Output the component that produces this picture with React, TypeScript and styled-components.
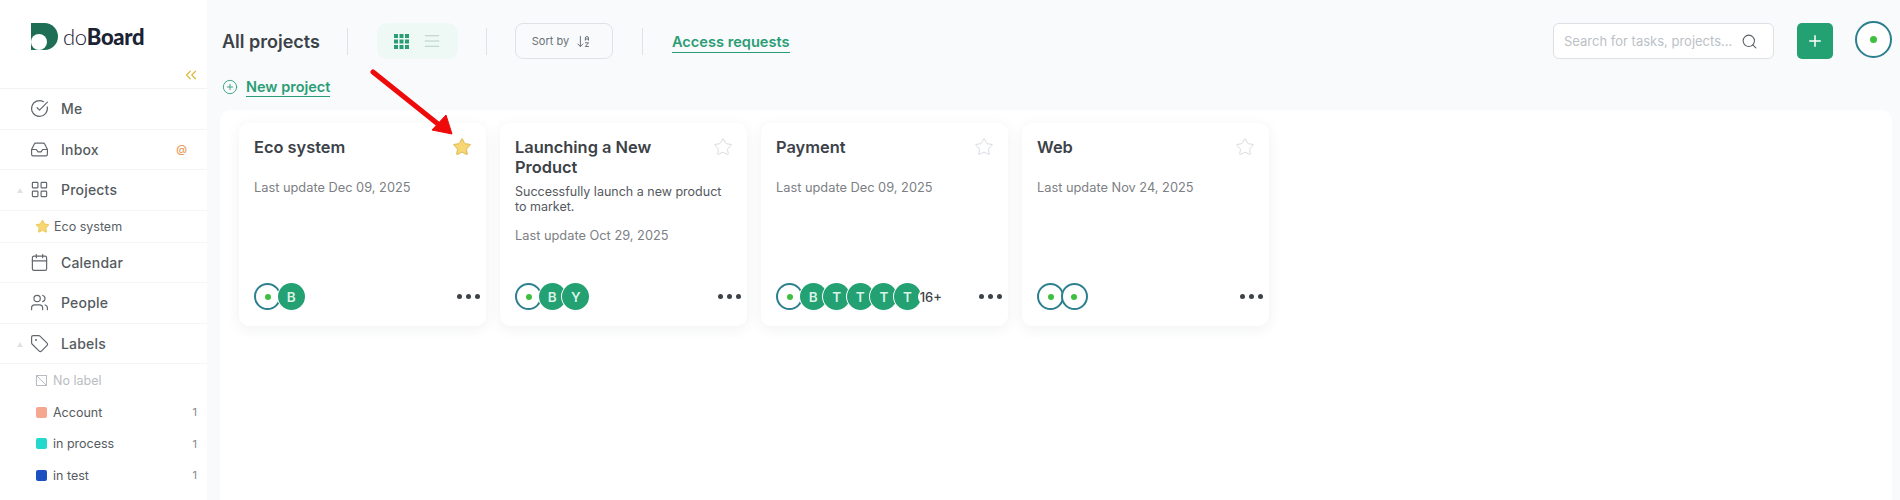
import React from 'react';
import styled, { createGlobalStyle } from 'styled-components';
import {
  AlignJustify,
  ArrowDownAZ,
  Calendar,
  ChevronsLeft,
  CircleCheckBig,
  CirclePlus,
  Inbox,
  LayoutGrid,
  Plus,
  Search,
  Star,
  Tag,
  Users,
} from 'lucide-react';

const GlobalStyle = createGlobalStyle`
  html, body {
    margin: 0;
    height: 100%;
    overflow: hidden;
    background: #f8fafc;
    font-family: Inter, "Liberation Sans", sans-serif;
    color: #3c4248;
  }
  * { box-sizing: border-box; }
`;

type Person = { initial?: string };
type Project = {
  title: string;
  desc?: string;
  updated: string;
  starred?: boolean;
  people: Person[];
  more?: string;
};

const projects: Project[] = [
  { title: 'Eco system', updated: 'Dec 09, 2025', starred: true, people: [{}, { initial: 'B' }] },
  {
    title: 'Launching a New Product',
    desc: 'Successfully launch a new product to market.',
    updated: 'Oct 29, 2025',
    people: [{}, { initial: 'B' }, { initial: 'Y' }],
  },
  {
    title: 'Payment',
    updated: 'Dec 09, 2025',
    people: [{}, { initial: 'B' }, { initial: 'T' }, { initial: 'T' }, { initial: 'T' }, { initial: 'T' }],
    more: '16+',
  },
  { title: 'Web', updated: 'Nov 24, 2025', people: [{}, {}] },
];

export default function App() {
  return (
    <Page>
      <GlobalStyle />
      <Sidebar>
        <LogoRow>
          <svg width="28" height="28" viewBox="0 0 28 28">
            <path d="M0 0H13.5A13.5 13.5 0 0 1 13.5 27H0Z" fill="#1d6e55" />
            <circle cx="8" cy="19" r="8" fill="#fff" />
          </svg>
          <LogoText>
            <LogoLight>do</LogoLight>Board
          </LogoText>
        </LogoRow>
        <CollapseRow>
          <ChevronsLeft size={18} color="#dcb93c" strokeWidth={1.6} />
        </CollapseRow>
        <NavRow>
          <CircleCheckBig size={19} strokeWidth={1.5} />
          <NavLabel>Me</NavLabel>
        </NavRow>
        <NavRow>
          <Inbox size={19} strokeWidth={1.5} />
          <NavLabel>Inbox</NavLabel>
          <Mention>@</Mention>
        </NavRow>
        <NavRow>
          <Caret />
          <LayoutGrid size={19} strokeWidth={1.5} />
          <NavLabel>Projects</NavLabel>
        </NavRow>
        <SubRow>
          <Star size={15} fill="#f7d774" color="#e8c64f" strokeWidth={1.5} />
          Eco system
        </SubRow>
        <NavRow>
          <Calendar size={19} strokeWidth={1.5} />
          <NavLabel>Calendar</NavLabel>
        </NavRow>
        <NavRow>
          <Users size={19} strokeWidth={1.5} />
          <NavLabel>People</NavLabel>
        </NavRow>
        <NavRow>
          <Caret />
          <Tag size={19} strokeWidth={1.5} />
          <NavLabel>Labels</NavLabel>
        </NavRow>
        <LabelList>
          <LabelRow $muted>
            <svg width="11" height="11" viewBox="0 0 11 11" fill="none" stroke="#b9bdc1">
              <rect x="0.5" y="0.5" width="10" height="10" />
              <path d="M0.5 0.5L10.5 10.5" />
            </svg>
            No label
          </LabelRow>
          <LabelRow>
            <Swatch $color="#f5a78f" />
            Account
            <LabelCount>1</LabelCount>
          </LabelRow>
          <LabelRow>
            <Swatch $color="#24d8cc" />
            in process
            <LabelCount>1</LabelCount>
          </LabelRow>
          <LabelRow>
            <Swatch $color="#1c4fc0" />
            in test
            <LabelCount>1</LabelCount>
          </LabelRow>
        </LabelList>
      </Sidebar>

      <Main>
        <TopBar>
          <PageTitle>All projects</PageTitle>
          <Divider />
          <ViewToggle>
            <svg width="15" height="15" viewBox="0 0 15 15" fill="#2a9d75">
              {[0, 5.5, 11].map((y) =>
                [0, 5.5, 11].map((x) => <rect key={`${x}-${y}`} x={x} y={y} width="4" height="4" />),
              )}
            </svg>
            <AlignJustify size={18} color="#b7cdc5" strokeWidth={1.6} />
          </ViewToggle>
          <Divider />
          <SortButton>
            Sort by
            <ArrowDownAZ size={15} color="#5f6a70" strokeWidth={1.5} />
          </SortButton>
          <Divider />
          <AccessLink>Access requests</AccessLink>
          <Spacer />
          <SearchBox>
            <SearchHint>Search for tasks, projects...</SearchHint>
            <Search size={17} color="#5b6166" strokeWidth={1.5} />
          </SearchBox>
          <AddButton>
            <Plus size={18} color="#fff" strokeWidth={2} />
          </AddButton>
          <ProfileAvatar>
            <Dot />
          </ProfileAvatar>
        </TopBar>

        <NewProject>
          <CirclePlus size={16} color="#2a9d75" strokeWidth={1.3} />
          <NewProjectLabel>New project</NewProjectLabel>
        </NewProject>

        <Panel>
          {projects.map((p) => (
            <Card key={p.title}>
              <CardHead>
                <CardTitle>{p.title}</CardTitle>
                {p.starred ? (
                  <Star size={20} fill="#f7d774" color="#d9b850" strokeWidth={1.2} />
                ) : (
                  <Star size={20} color="#cfd4da" strokeWidth={1} />
                )}
              </CardHead>
              {p.desc && <CardDesc>{p.desc}</CardDesc>}
              <CardDate $afterDesc={!!p.desc}>Last update {p.updated}</CardDate>
              <CardFoot>
                <People>
                  {p.people.map((person, i) =>
                    person.initial ? (
                      <Initial key={i}>{person.initial}</Initial>
                    ) : (
                      <Ring key={i}>
                        <Dot $small />
                      </Ring>
                    ),
                  )}
                  {p.more && <More>{p.more}</More>}
                </People>
                <Dots>
                  <i />
                  <i />
                  <i />
                </Dots>
              </CardFoot>
            </Card>
          ))}
        </Panel>
      </Main>

      <Arrow width="100" height="80" viewBox="0 0 100 80">
        <path d="M3 3L68 55" stroke="#ee0a0a" strokeWidth="5" strokeLinecap="round" />
        <path d="M82 65L76 46L62 61Z" fill="#ee0a0a" stroke="#ee0a0a" strokeWidth="1" />
      </Arrow>
    </Page>
  );
}

const Page = styled.div`
  position: relative;
  display: flex;
  height: 500px;
  overflow: hidden;
`;

const Sidebar = styled.aside`
  flex: 0 0 207px;
  background: #fff;
  display: flex;
  flex-direction: column;
`;

const LogoRow = styled.div`
  height: 64px;
  padding: 23px 0 0 31px;
  display: flex;
  gap: 4px;
  align-items: flex-start;
`;

const LogoText = styled.div`
  font-family: Lato, Inter, sans-serif;
  font-size: 22px;
  line-height: 28px;
  font-weight: 900;
  letter-spacing: -0.3px;
  color: #1a2233;
`;

const LogoLight = styled.span`
  font-weight: 300;
`;

const CollapseRow = styled.div`
  height: 25px;
  padding: 2px 7px 0 0;
  display: flex;
  justify-content: flex-end;
  align-items: flex-start;
  border-bottom: 1px solid #f1f3f5;
`;

const NavRow = styled.div`
  position: relative;
  height: 40.5px;
  padding: 0 11px 0 30px;
  display: flex;
  align-items: center;
  gap: 12px;
  color: #63686d;
  border-bottom: 1px solid #f3f5f6;
`;

const NavLabel = styled.span`
  flex: 1;
  font-size: 14px;
  font-weight: 500;
  letter-spacing: 0.2px;
  color: #555b60;
`;

const Mention = styled.span`
  font-size: 11px;
  font-weight: 500;
  color: #e8995a;
  margin-right: 9px;
`;

const Caret = styled.span`
  position: absolute;
  left: 17px;
  top: 18px;
  border-left: 3.5px solid transparent;
  border-right: 3.5px solid transparent;
  border-bottom: 5px solid #dfe2e4;
`;

const SubRow = styled.div`
  height: 32px;
  padding-left: 35px;
  display: flex;
  align-items: center;
  gap: 4px;
  font-size: 12.5px;
  color: #5a6066;
  border-bottom: 1px solid #f3f5f6;
`;

const LabelList = styled.div`
  padding-top: 1px;
  display: flex;
  flex-direction: column;
`;

const LabelRow = styled.div<{ $muted?: boolean }>`
  height: 31.5px;
  padding: 0 10px 0 36px;
  display: flex;
  align-items: center;
  gap: 6px;
  font-size: 12.5px;
  color: ${({ $muted }) => ($muted ? '#b9bdc1' : '#555b61')};
`;

const Swatch = styled.span<{ $color: string }>`
  width: 11px;
  height: 11px;
  border-radius: 2px;
  background: ${({ $color }) => $color};
`;

const LabelCount = styled.span`
  margin-left: auto;
  font-size: 11px;
  color: #85898d;
`;

const Main = styled.main`
  flex: 1;
  min-width: 0;
  display: flex;
  flex-direction: column;
  background: #f8fafc;
`;

const TopBar = styled.div`
  height: 73px;
  padding: 23px 8px 0 15px;
  display: flex;
  align-items: flex-start;
`;

const PageTitle = styled.h1`
  margin: 0 27px 0 0;
  font-size: 18px;
  line-height: 37px;
  font-weight: 600;
  color: #3c4248;
`;

const Divider = styled.span`
  width: 1px;
  height: 27px;
  margin-top: 5px;
  background: #dfe3e6;
`;

const ViewToggle = styled.div`
  width: 81px;
  height: 36px;
  margin: 0 28px 0 29px;
  border-radius: 10px;
  background: #eef9f5;
  display: flex;
  align-items: center;
  justify-content: center;
  gap: 14px;
`;

const SortButton = styled.div`
  width: 98px;
  height: 36px;
  margin: 0 29px 0 28px;
  padding-right: 5px;
  border: 1px solid #dfe3e7;
  border-radius: 8px;
  display: flex;
  align-items: center;
  justify-content: center;
  gap: 7px;
  font-size: 11px;
  color: #6a7177;
`;

const AccessLink = styled.a`
  margin: 9px 0 0 29px;
  font-size: 14.6px;
  line-height: 20px;
  font-weight: 600;
  color: #2a9d75;
  border-bottom: 1px solid #2a9d75;
`;

const Spacer = styled.span`
  flex: 1;
`;

const SearchBox = styled.div`
  width: 221px;
  height: 36px;
  padding: 0 15px 0 10px;
  border: 1px solid #dde1e6;
  border-radius: 6px;
  background: #fff;
  display: flex;
  align-items: center;
  justify-content: space-between;
`;

const SearchHint = styled.span`
  font-size: 13px;
  color: #bcc1c6;
`;

const AddButton = styled.div`
  width: 36px;
  height: 36px;
  margin-left: 23px;
  border-radius: 5px;
  background: #23a172;
  display: flex;
  align-items: center;
  justify-content: center;
`;

const ProfileAvatar = styled.div`
  width: 37px;
  height: 37px;
  margin: -2px 0 0 22px;
  border: 2px solid #2c7f8f;
  border-radius: 50%;
  background: #fff;
  display: flex;
  align-items: center;
  justify-content: center;
`;

const Dot = styled.span<{ $small?: boolean }>`
  width: ${({ $small }) => ($small ? 6 : 7)}px;
  height: ${({ $small }) => ($small ? 6 : 7)}px;
  border-radius: 50%;
  background: #3fbf3f;
`;

const NewProject = styled.div`
  height: 28px;
  margin-bottom: 9px;
  padding-left: 15px;
  display: flex;
  align-items: center;
  gap: 8px;
`;

const NewProjectLabel = styled.span`
  font-size: 14.5px;
  line-height: 18px;
  font-weight: 600;
  color: #2a9d75;
  border-bottom: 1px solid #2a9d75;
`;

const Panel = styled.section`
  flex: 1;
  margin: 0 8px 0 13px;
  padding: 13px 19px;
  border-radius: 10px 10px 0 0;
  background: #fff;
  display: flex;
  align-items: flex-start;
  gap: 14px;
`;

const Card = styled.article`
  width: 247px;
  height: 203px;
  padding: 14px 6px 0 15px;
  border-radius: 10px;
  background: #fff;
  box-shadow: 0 3px 14px rgba(40, 60, 80, 0.07);
  display: flex;
  flex-direction: column;
`;

const CardHead = styled.div`
  display: flex;
  justify-content: space-between;
  align-items: flex-start;
  padding-right: 8px;
  min-height: 20px;
`;

const CardTitle = styled.h2`
  margin: 0;
  max-width: 185px;
  font-size: 16.4px;
  line-height: 20px;
  font-weight: 600;
  color: #3c4248;
`;

const CardDesc = styled.p`
  margin: 7px 0 0;
  max-width: 215px;
  font-size: 12.5px;
  line-height: 15px;
  color: #55595e;
`;

const CardDate = styled.div<{ $afterDesc: boolean }>`
  margin-top: ${({ $afterDesc }) => ($afterDesc ? 14 : 23)}px;
  font-size: 12.8px;
  line-height: 16px;
  color: #7c8084;
`;

const CardFoot = styled.div`
  margin-top: auto;
  margin-bottom: 16px;
  display: flex;
  justify-content: space-between;
  align-items: center;
`;

const People = styled.div`
  display: flex;
  align-items: center;
`;

const Ring = styled.span`
  width: 27px;
  height: 27px;
  margin-right: -3.4px;
  border: 2px solid #2c7f8f;
  border-radius: 50%;
  background: #fff;
  display: flex;
  align-items: center;
  justify-content: center;
`;

const Initial = styled.span`
  position: relative;
  width: 27px;
  height: 27px;
  margin-right: -3.4px;
  border-radius: 50%;
  background: #23a172;
  box-shadow: -1px 0 0 #fff;
  display: flex;
  align-items: center;
  justify-content: center;
  font-size: 13.5px;
  font-weight: 600;
  color: #d9f3e8;
`;

const More = styled.span`
  position: relative;
  margin-left: 0;
  padding-left: 2px;
  border-radius: 8px;
  background: #fff;
  font-size: 13px;
  font-weight: 500;
  color: #3c4248;
`;

const Dots = styled.div`
  display: flex;
  gap: 4px;

  i {
    width: 5px;
    height: 5px;
    border-radius: 50%;
    background: #3c4248;
  }
`;

const Arrow = styled.svg`
  position: absolute;
  left: 370px;
  top: 69px;
`;
